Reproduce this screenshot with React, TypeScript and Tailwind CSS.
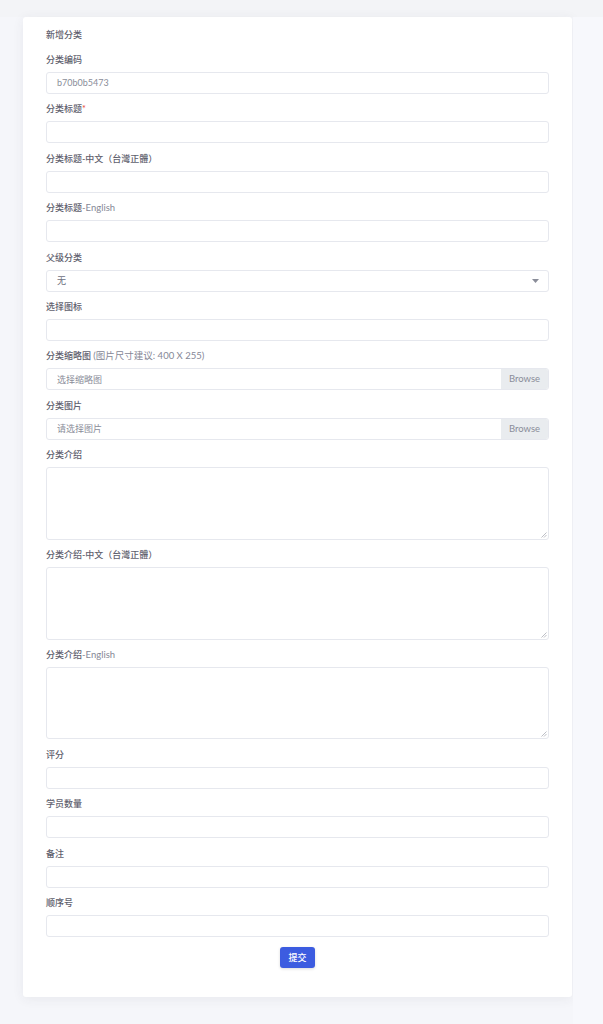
import React from "react";

const font = { fontFamily: "Lato, 'Noto Sans CJK SC', sans-serif" };

function Label({ children }: { children: React.ReactNode }) {
  return (
    <div className="h-[12px] leading-[12px] text-[9px] font-medium text-[#5f616e] mb-[6px]">
      {children}
    </div>
  );
}

function Input({ value, placeholder }: { value?: string; placeholder?: string }) {
  return (
    <div className="h-[22px] rounded-[3px] border border-[#e6e8ee] bg-white flex items-center px-[10px] text-[9px] text-[#8a8d99] mb-[9.4px]">
      {value ?? placeholder ?? ""}
    </div>
  );
}

function FileInput({ placeholder }: { placeholder: string }) {
  return (
    <div className="h-[22px] rounded-[3px] border border-[#e6e8ee] bg-white flex items-stretch text-[9px] mb-[9.4px] overflow-hidden">
      <div className="flex-1 flex items-center px-[10px] text-[#8a8d99]">{placeholder}</div>
      <div className="w-[47px] bg-[#e9ecef] flex items-center justify-center text-[#8a8d99] text-[9.5px]">Browse</div>
    </div>
  );
}

function TextArea() {
  return (
    <div className="relative h-[72.5px] rounded-[3px] border border-[#e6e8ee] bg-white mb-[9.4px]">
      <svg className="absolute right-[1px] bottom-[1px]" width="6" height="6" viewBox="0 0 6 6">
        <line x1="0.5" y1="5.5" x2="5.5" y2="0.5" stroke="#a0a3ad" strokeWidth="0.7" />
        <line x1="3" y1="5.5" x2="5.5" y2="3" stroke="#a0a3ad" strokeWidth="0.7" />
      </svg>
    </div>
  );
}

export default function App() {
  return (
    <div className="min-h-[1024px] bg-[#f4f5f8] flex flex-col" style={font}>
      <div className="h-[17px] bg-[#f3f4f7]" />
      <div className="flex flex-1 bg-[#f5f6fa]">
        <div className="ml-[23px] w-[549px] shrink-0 self-start bg-white rounded-[3px] shadow-[0_2px_12px_rgba(58,59,69,0.07)] px-[23px] pt-[12px] pb-[29px] mb-[27px]">
          <div className="h-[12px] leading-[12px] text-[9px] font-medium text-[#5f616e] mb-[13px]">新增分类</div>

          <Label>分类编码</Label>
          <Input value="b70b0b5473" />

          <Label>
            分类标题<span className="text-[#e74a3b]">*</span>
          </Label>
          <Input />

          <Label>分类标题-中文（台灣正體）</Label>
          <Input />

          <Label>
            分类标题<span className="font-normal text-[#858796] text-[9.5px]">-English</span>
          </Label>
          <Input />

          <Label>父级分类</Label>
          <div className="h-[22px] rounded-[3px] border border-[#e6e8ee] bg-white flex items-center justify-between px-[10px] text-[9px] text-[#6e707e] mb-[9.4px]">
            <span>无</span>
            <svg width="7" height="4" viewBox="0 0 7 4" className="mr-[-1px]">
              <path d="M0 0 L7 0 L3.5 4 Z" fill="#8a8d99" />
            </svg>
          </div>

          <Label>选择图标</Label>
          <Input />

          <Label>
            分类缩略图 <span className="font-normal text-[#858796] text-[9.5px]">(图片尺寸建议: 400 X 255)</span>
          </Label>
          <FileInput placeholder="选择缩略图" />

          <Label>分类图片</Label>
          <FileInput placeholder="请选择图片" />

          <Label>分类介绍</Label>
          <TextArea />

          <Label>分类介绍-中文（台灣正體）</Label>
          <TextArea />

          <Label>
            分类介绍<span className="font-normal text-[#858796] text-[9.5px]">-English</span>
          </Label>
          <TextArea />

          <Label>评分</Label>
          <Input />

          <Label>学员数量</Label>
          <Input />

          <Label>备注</Label>
          <Input />

          <Label>顺序号</Label>
          <Input />

          <div className="flex justify-center pt-[1px]">
            <button className="w-[35px] h-[21px] rounded-[3px] bg-[#3c5ce0] text-white text-[9px] font-medium shadow-[0_1px_3px_rgba(0,0,0,0.15)]">
              提交
            </button>
          </div>
        </div>
        <div className="flex-1 ml-[1px] bg-[#f7f8fc]" />
      </div>
    </div>
  );
}
